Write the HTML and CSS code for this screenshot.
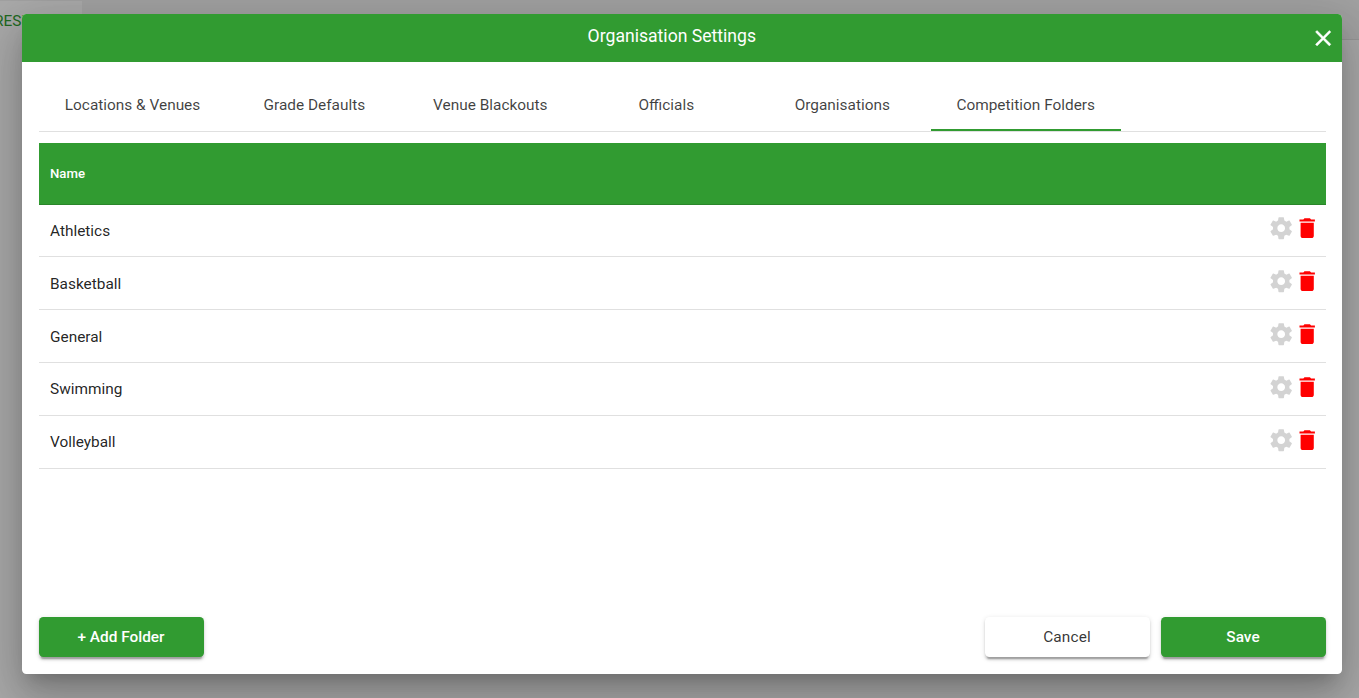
FILE: index.html
```html
<!DOCTYPE html>
<html lang="en">
<head>
  <meta charset="UTF-8">
  <meta name="viewport" content="width=device-width, initial-scale=1.0">
  <title>Organisation Settings</title>
  <link rel="stylesheet" href="styles.css">
</head>
<body>
  <svg class="sprite" aria-hidden="true">
    <symbol id="gear" viewBox="0 0 24 24">
      <path d="M19.43 12.98c.04-.32.07-.64.07-.98s-.03-.66-.07-.98l2.11-1.65c.19-.15.24-.42.12-.64l-2-3.46c-.12-.22-.39-.3-.61-.22l-2.49 1c-.52-.4-1.08-.73-1.69-.98l-.38-2.65C14.46 2.18 14.25 2 14 2h-4c-.25 0-.46.18-.49.42l-.38 2.65c-.61.25-1.17.59-1.69.98l-2.49-1c-.23-.09-.49 0-.61.22l-2 3.46c-.13.22-.07.49.12.64l2.11 1.65c-.04.32-.07.65-.07.98s.03.66.07.98l-2.11 1.65c-.19.15-.24.42-.12.64l2 3.46c.12.22.39.3.61.22l2.49-1c.52.4 1.08.73 1.69.98l.38 2.65c.03.24.24.42.49.42h4c.25 0 .46-.18.49-.42l.38-2.65c.61-.25 1.17-.59 1.69-.98l2.49 1c.23.09.49 0 .61-.22l2-3.46c.12-.22.07-.49-.12-.64l-2.11-1.65zM12 15.5c-1.93 0-3.5-1.57-3.5-3.5s1.57-3.5 3.5-3.5 3.5 1.57 3.5 3.5-1.57 3.5-3.5 3.5z"></path>
    </symbol>
    <symbol id="trash" viewBox="0 0 24 24">
      <path d="M6 19c0 1.1.9 2 2 2h8c1.1 0 2-.9 2-2V7H6v12zM19 4h-3.5l-1-1h-5l-1 1H5v2h14V4z"></path>
    </symbol>
  </svg>

  <div class="page">
    <div class="page-tabs"><span class="page-tab">RESULTS</span></div>
  </div>

  <div class="backdrop">
    <div class="dialog">
      <div class="dialog-header">
        <h1>Organisation Settings</h1>
        <svg class="close" viewBox="0 0 24 24" fill="white" stroke="white" stroke-width="0.4">
          <path d="M19 6.41L17.59 5 12 10.59 6.41 5 5 6.41 10.59 12 5 17.59 6.41 19 12 13.41 17.59 19 19 17.59 13.41 12z"></path>
        </svg>
      </div>

      <div class="dialog-content">
        <div class="tabs">
          <div class="tab">Locations &amp; Venues</div>
          <div class="tab">Grade Defaults</div>
          <div class="tab">Venue Blackouts</div>
          <div class="tab">Officials</div>
          <div class="tab">Organisations</div>
          <div class="tab active">Competition Folders</div>
        </div>

        <div class="table">
          <div class="table-head">Name</div>
          <div class="row">
            <span class="name">Athletics</span>
            <svg class="icon gear"><use href="#gear"></use></svg>
            <svg class="icon trash"><use href="#trash"></use></svg>
          </div>
          <div class="row">
            <span class="name">Basketball</span>
            <svg class="icon gear"><use href="#gear"></use></svg>
            <svg class="icon trash"><use href="#trash"></use></svg>
          </div>
          <div class="row">
            <span class="name">General</span>
            <svg class="icon gear"><use href="#gear"></use></svg>
            <svg class="icon trash"><use href="#trash"></use></svg>
          </div>
          <div class="row">
            <span class="name">Swimming</span>
            <svg class="icon gear"><use href="#gear"></use></svg>
            <svg class="icon trash"><use href="#trash"></use></svg>
          </div>
          <div class="row">
            <span class="name">Volleyball</span>
            <svg class="icon gear"><use href="#gear"></use></svg>
            <svg class="icon trash"><use href="#trash"></use></svg>
          </div>
        </div>

        <div class="actions">
          <button class="primary">+ Add Folder</button>
          <div class="spacer"></div>
          <button>Cancel</button>
          <button class="primary">Save</button>
        </div>
      </div>
    </div>
  </div>
</body>
</html>
```

FILE: styles.css
```css
:root {
  --primary-color: #319b31;
  --text-color: rgba(0, 0, 0, 0.87);
  --border-color: #e0e0e0;
}

* {
  margin: 0;
  padding: 0;
  box-sizing: border-box;
}

body {
  height: 698px;
  font-family: Roboto, sans-serif;
  background-color: #fafafa;
  color: var(--text-color);
  overflow: hidden;
}

.sprite {
  display: none;
}

/* Page behind the dialog */
.page {
  height: 698px;
}

.page-tabs {
  height: 40px;
  background-color: #eeeeee;
  border-bottom: 1px solid #dddddd;
}

.page-tab {
  display: block;
  width: 82px;
  height: 40px;
  border-top: 1px solid #eeeeee;
  background-color: #fafafa;
  color: #319b31;
  font-size: 15.4px;
  line-height: 40px;
  text-indent: -6px;
}

/* Dialog */
.backdrop {
  position: absolute;
  inset: 0;
  padding: 14px 17px 24px 22px;
  background-color: rgba(0, 0, 0, 0.32);
}

.dialog {
  display: flex;
  flex-direction: column;
  height: 660px;
  border-radius: 4.4px;
  overflow: hidden;
  background-color: white;
  box-shadow: 0 12px 16.5px -7.7px rgba(0, 0, 0, 0.2),
    0 26.4px 41.8px 3.3px rgba(0, 0, 0, 0.14),
    0 9.9px 50.6px 8.8px rgba(0, 0, 0, 0.12);
}

.dialog-header {
  display: flex;
  align-items: center;
  height: 48px;
  padding: 0 6px 0 12px;
  background-color: var(--primary-color);
  color: white;
}

.dialog-header h1 {
  flex: 1;
  padding-bottom: 4px;
  font-size: 17.6px;
  font-weight: 400;
  text-align: center;
}

.close {
  width: 26.4px;
  height: 26.4px;
}

.dialog-content {
  flex: 1;
  display: flex;
  flex-direction: column;
  padding: 16px 16px 17px 17px;
}

.tabs {
  display: flex;
  height: 54px;
  border-bottom: 1px solid var(--border-color);
}

.tab {
  min-width: 176px;
  padding: 0 26.4px 0 25.8px;
  font-size: 15.4px;
  line-height: 54px;
  text-align: center;
  white-space: nowrap;
  color: rgba(0, 0, 0, 0.75);
}

.tab.active {
  border-bottom: 2px solid var(--primary-color);
}

/* Table */
.table {
  flex: 1;
  margin-top: 11px;
}

.table-head {
  height: 61.6px;
  padding-left: 11px;
  border-bottom: 1px solid #2a852a;
  background-color: var(--primary-color);
  color: white;
  font-size: 13.2px;
  font-weight: 500;
  line-height: 61px;
}

.row {
  display: flex;
  align-items: center;
  height: 52.8px;
  padding: 1px 6px 0 11px;
  border-bottom: 1px solid var(--border-color);
}

.name {
  flex: 1;
  font-size: 15.4px;
}

.icon {
  width: 26.4px;
  height: 26.4px;
  margin-bottom: 4.8px;
}

.gear {
  margin-right: -0.6px;
  fill: #d3d3d3;
}

.trash {
  fill: #ff0000;
}

/* Buttons */
.actions {
  display: flex;
  gap: 11px;
}

.spacer {
  flex: 1;
}

button {
  width: 165px;
  height: 40px;
  padding-right: 1px;
  border: none;
  border-radius: 4.4px;
  background-color: white;
  color: rgba(0, 0, 0, 0.8);
  font-family: Roboto, sans-serif;
  font-size: 15.4px;
  letter-spacing: 0.15px;
  box-shadow: 0 3.3px 1.1px -2.2px rgba(0, 0, 0, 0.2),
    0 2.2px 2.2px 0 rgba(0, 0, 0, 0.14),
    0 1.1px 5.5px 0 rgba(0, 0, 0, 0.12);
}

button.primary {
  background-color: var(--primary-color);
  color: white;
  font-weight: 500;
  letter-spacing: 0;
}
```
